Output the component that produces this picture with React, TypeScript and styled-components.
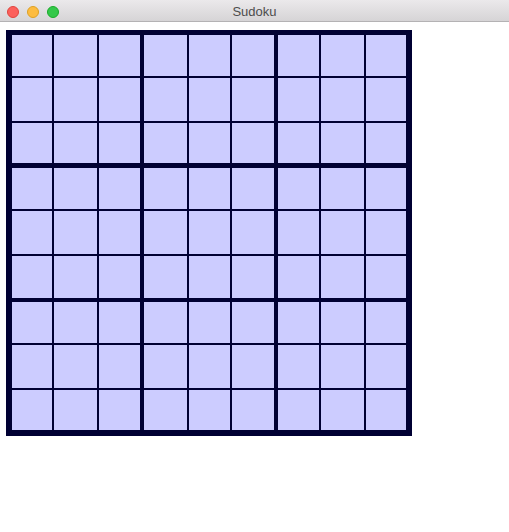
import React from 'react';
import { styled, createGlobalStyle } from 'styled-components';

const GlobalStyle = createGlobalStyle`
  html, body {
    margin: 0;
    padding: 0;
    background: #ffffff;
  }
  body {
    font-family: 'Liberation Sans', Arial, sans-serif;
  }
`;

const Window = styled.div`
  width: 509px;
  height: 532px;
  background: #ffffff;
  display: flex;
  flex-direction: column;
`;

const TitleBar = styled.header`
  position: relative;
  height: 21px;
  border-bottom: 1px solid #b4b2b4;
  background: linear-gradient(to bottom, #ebe9eb 0%, #d6d4d6 100%);
  display: flex;
  align-items: center;
  justify-content: center;
`;

const Lights = styled.div`
  position: absolute;
  left: 7px;
  top: 6px;
  display: flex;
  gap: 8px;
`;

const Light = styled.span<{ $fill: string; $edge: string }>`
  width: 12px;
  height: 12px;
  box-sizing: border-box;
  border-radius: 50%;
  background: ${({ $fill }) => $fill};
  border: 1px solid ${({ $edge }) => $edge};
`;

const Title = styled.h1`
  margin: 0;
  font-size: 13px;
  font-weight: 400;
  line-height: 21px;
  color: #4d4d4d;
  padding-top: 1px;
`;

const Content = styled.main`
  padding: 8px 0 0 6px;
`;

const Board = styled.div`
  display: grid;
  grid-template-columns: 128px 130px 128px;
  grid-template-rows: 129px 130px 128px;
  gap: 4px;
  width: fit-content;
  padding: 5px 6px 6px 6px;
  background: #000033;
`;

const Box = styled.div<{ $cols: number[]; $rows: number[] }>`
  display: grid;
  grid-template-columns: ${({ $cols }) => $cols.map((c) => `${c}px`).join(' ')};
  grid-template-rows: ${({ $rows }) => $rows.map((r) => `${r}px`).join(' ')};
  gap: 2px;
  align-content: start;
`;

const Cell = styled.div`
  background: #ccccff;
`;

// measured track sizes, per box column / box row
const colTracks = [
  [40, 43, 41],
  [43, 41, 42],
  [41, 43, 40],
];
const rowTracks = [
  [41, 43, 40],
  [41, 43, 42],
  [41, 43, 40],
];

const App: React.FC = () => {
  const boxes = [];
  for (let br = 0; br < 3; br++) {
    for (let bc = 0; bc < 3; bc++) {
      boxes.push(
        <Box key={`${br}-${bc}`} $cols={colTracks[bc]} $rows={rowTracks[br]}>
          {Array.from({ length: 9 }, (_, i) => (
            <Cell key={i} />
          ))}
        </Box>
      );
    }
  }

  return (
    <>
      <GlobalStyle />
      <Window>
        <TitleBar>
          <Lights>
            <Light $fill="#fc605c" $edge="#e0443e" />
            <Light $fill="#fdbc40" $edge="#dea123" />
            <Light $fill="#34c84a" $edge="#1aab29" />
          </Lights>
          <Title>Sudoku</Title>
        </TitleBar>
        <Content>
          <Board>{boxes}</Board>
        </Content>
      </Window>
    </>
  );
};

export default App;
